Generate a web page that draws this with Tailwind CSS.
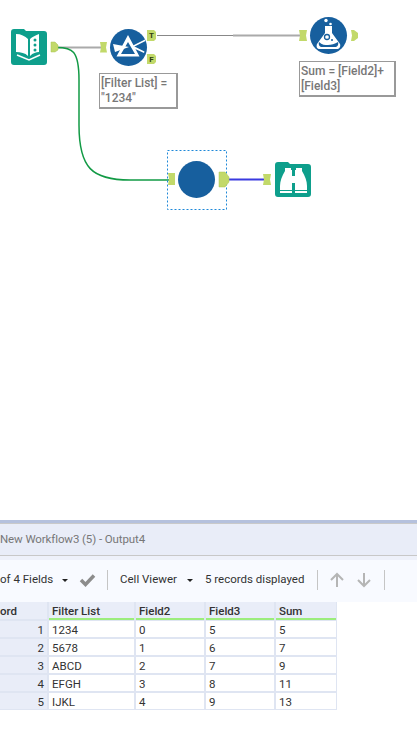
<!DOCTYPE html>
<html lang="en">
<head>
    <meta charset="UTF-8">
    <title>New Workflow3 (5) - Output4</title>
    <script src="https://cdn.jsdelivr.net/npm/@tailwindcss/browser@4"></script>
</head>
<body class="bg-white w-[417px] h-[742px] overflow-hidden font-['Roboto',sans-serif] text-[11.5px] text-[#333]">
    <!-- Workflow canvas -->
    <div class="relative h-[520px]">
        <!-- Connections and nodes -->
        <svg class="absolute left-0 top-0" width="417" height="520" viewBox="0 0 417 520" fill="none">
            <path d="M57 47.5H102" stroke="#aaa" stroke-width="2"/>
            <path d="M57 47.5C72 47.5 79 50 79 80V125C79 168 92 180 130 180H171" stroke="#129a45" stroke-width="1.5"/>
            <path d="M157 35.5H233" stroke="#888" stroke-width="1.2"/>
            <path d="M233 35.5H302" stroke="#aaa" stroke-width="2"/>
            <path d="M229 179.5H267" stroke="#3a3ae0" stroke-width="2"/>

            <!-- Input book -->
            <path d="M11 32a3 3 0 0 1 3-3h10l2 2h18a3 3 0 0 1 3 3v28a3 3 0 0 1-3 3H14a3 3 0 0 1-3-3Z" fill="#0e9f8c"/>
            <path d="M16 34c5 0 9 2 12 5v17c-3-3-7-4-12-4Z" fill="#fff"/>
            <path d="M30 39c2-2 6-4 9-5v18c-3 0-6 1-9 4Z" fill="#fff"/>
            <circle cx="35" cy="40" r="1.500" fill="#0e9f8c"/>
            <circle cx="35" cy="45" r="1.500" fill="#0e9f8c"/>
            <circle cx="35" cy="50" r="1.500" fill="#0e9f8c"/>
            <path d="M17 55l12 5 11-5" stroke="#fff" stroke-width="1.500"/>
            <path d="M51 42h4l3 3v5l-3 2h-4Z" fill="#c2d96a" stroke="#a9c455" stroke-width=".5"/>

            <!-- Filter -->
            <path d="M100 42h7l-1 5.500 1 5h-7l1-5Z" fill="#c2d96a"/>
            <circle cx="128.500" cy="47.500" r="18.500" fill="#175f9e"/>
            <path d="M128 35l-11.500 21.500h23Z M128 42l-7 12h14Z" fill="#fff" fill-rule="evenodd"/>
            <path d="M113 44l16 3-14 5Z" fill="#fff"/>
            <path d="M132 46l13-6.500.5 1.500-12 6Z M133 48l11 5 .5-1.500-10-5Z" fill="#fff"/>
            <path d="M147 30h7l2 2v7l-2 2h-7Z" fill="#c2d96a"/>
            <path d="M147 54h7l2 2v6l-2 2h-7Z" fill="#c2d96a"/>

            <!-- Formula -->
            <path d="M299 30h8l-1 5.500 1 5.500h-8l1-5.500Z" fill="#c2d96a"/>
            <circle cx="328.500" cy="35.500" r="18.500" fill="#175f9e"/>
            <circle cx="326" cy="20.500" r="1.700" fill="#fff"/>
            <circle cx="330.500" cy="24" r="1.300" fill="#fff"/>
            <path d="M325 26h7v7l8 11c1 3-1 5-3 5h-17c-3 0-4-2-3-5l8-11Z" fill="#fff"/>
            <circle cx="327" cy="37" r="2.500" fill="none" stroke="#175f9e" stroke-width="1.300"/>
            <circle cx="332" cy="40" r="1" fill="#175f9e"/>
            <path d="M319 42c3 3 6 3 9 3s7-1 10-3c1 3-1 5-3 5h-13c-2 0-4-2-3-5Z" fill="#175f9e"/>
            <path d="M351 30h3l4 3v5l-4 3h-3l1-5.500Z" fill="#c2d96a"/>

            <!-- Selected tool -->
            <rect x="167.500" y="150.500" width="59" height="59" stroke="#1e88d8" stroke-dasharray="2 2"/>
            <path d="M168 173h7v12h-7l1-6Z" fill="#c2d96a"/>
            <circle cx="196.500" cy="179.500" r="18.500" fill="#175f9e"/>
            <path d="M219 172h6l4 5v5l-4 5h-6Z" fill="#c2d96a" stroke="#a9c455" stroke-width=".5"/>

            <!-- Browse -->
            <path d="M263 174h8l-1 5.500 1 5.500h-8l1-5.500Z" fill="#c2d96a"/>
            <path d="M275 165a3 3 0 0 1 3-3h10l2 2h18a3 3 0 0 1 3 3v27a3 3 0 0 1-3 3h-30a3 3 0 0 1-3-3Z" fill="#0e9f8c"/>
            <path d="M285 168h6v2h1v20h-12v-4c0-5 2-10 5-15Z" fill="#fff"/>
            <path d="M296 168h6v3c3 5 5 10 5 15v4h-12v-20h1Z" fill="#fff"/>
            <path d="M292 176h3v7h-3Z" fill="#fff"/>
            <path d="M280 191h12v2h-12Z M295 191h12v2h-12Z" fill="#fff"/>
        </svg>
        <span class="absolute left-[148px] top-[30px] w-[7px] text-center text-[8px] leading-[11px] font-bold text-[#2f3d10]">T</span>
        <span class="absolute left-[148px] top-[54px] w-[7px] text-center text-[8px] leading-[11px] font-bold text-[#2f3d10]">F</span>

        <!-- Annotations -->
        <div class="absolute left-[99px] top-[73px] w-[79px] h-[36px] bg-white border border-[#999] border-r-2 border-b-2 pl-[1px] text-[12px] leading-[15px] pt-[2px] font-medium text-[#777]">[Filter List] =<br>"1234"</div>
        <div class="absolute left-[299px] top-[61px] w-[97px] h-[36px] bg-white border border-[#999] border-r-2 border-b-2 pl-[1px] text-[12px] leading-[15px] pt-[2px] font-medium text-[#777]">Sum = [Field2]+<br>[Field3]</div>
    </div>

    <!-- Results panel -->
    <div class="h-[3px] bg-[#b5c1dd]"></div>
    <div class="h-[1px] bg-[#c9c9c9]"></div>
    <div class="h-[32px] bg-[#e9edf8] border-b border-[#c8c8c8] flex items-center text-[#777] tracking-[-0.1px]">New Workflow3 (5) - Output4</div>
    <div class="h-[4px] bg-[#eef1fa]"></div>
    <div class="h-[42px] pb-[2px] bg-[#f8faff] flex items-center">
        <span class="w-[60px] shrink-0">of 4 Fields</span>
        <span class="w-0 h-0 ml-[2px] border-x-[3px] border-x-transparent border-t-[3px] border-t-[#222]"></span>
        <svg class="ml-[11px]" width="17" height="14" viewBox="0 0 17 14" fill="none"><path d="M2 7l4.500 4.500L15 2.500" stroke="#8c8c8c" stroke-width="3.500"/></svg>
        <span class="w-px h-[20px] ml-[11px] bg-[#c5c5c5]"></span>
        <span class="w-[58px] ml-[12px] shrink-0 whitespace-nowrap">Cell Viewer</span>
        <span class="w-0 h-0 ml-[9px] border-x-[3px] border-x-transparent border-t-[3px] border-t-[#222]"></span>
        <span class="ml-[12px] w-[100px] shrink-0 whitespace-nowrap">5 records displayed</span>
        <span class="w-px h-[20px] ml-[12px] bg-[#c5c5c5]"></span>
        <svg class="ml-[11px]" width="16" height="16" viewBox="0 0 16 16" fill="none"><path d="M8 15V2M2 8l6-6 6 6" stroke="#b5b5b5" stroke-width="2"/></svg>
        <svg class="ml-[11px]" width="16" height="16" viewBox="0 0 16 16" fill="none"><path d="M8 1v13M2 8l6 6 6-6" stroke="#b5b5b5" stroke-width="2"/></svg>
        <span class="w-px h-[20px] ml-[12px] bg-[#c5c5c5]"></span>
    </div>

    <!-- Data grid -->
    <div class="w-[337px] grid grid-cols-[47px_85px_68px_68px_60px] gap-[2px] bg-[#dfe5f2] pr-[1px] pb-[1px] leading-[18px]">
        <div class="bg-[#e9edf8] h-[17px] font-medium">ord</div>
        <div class="bg-[#e9edf8] h-[17px] pl-[3px] font-medium relative">Filter List<i class="absolute left-0 right-0 -bottom-[1px] h-[2px] bg-[#9ced7c]"></i></div>
        <div class="bg-[#e9edf8] h-[17px] pl-[3px] font-medium relative">Field2<i class="absolute left-0 right-0 -bottom-[1px] h-[2px] bg-[#9ced7c]"></i></div>
        <div class="bg-[#e9edf8] h-[17px] pl-[3px] font-medium relative">Field3<i class="absolute left-0 right-0 -bottom-[1px] h-[2px] bg-[#9ced7c]"></i></div>
        <div class="bg-[#e9edf8] h-[17px] pl-[3px] font-medium relative">Sum<i class="absolute left-0 right-0 -bottom-[1px] h-[2px] bg-[#9ced7c]"></i></div>

        <div class="bg-[#e9edf8] h-[16px] pr-[3px] text-right">1</div>
        <div class="bg-white h-[16px] pl-[3px]">1234</div>
        <div class="bg-white h-[16px] pl-[3px]">0</div>
        <div class="bg-white h-[16px] pl-[3px]">5</div>
        <div class="bg-white h-[16px] pl-[3px]">5</div>

        <div class="bg-[#e9edf8] h-[16px] pr-[3px] text-right">2</div>
        <div class="bg-white h-[16px] pl-[3px]">5678</div>
        <div class="bg-white h-[16px] pl-[3px]">1</div>
        <div class="bg-white h-[16px] pl-[3px]">6</div>
        <div class="bg-white h-[16px] pl-[3px]">7</div>

        <div class="bg-[#e9edf8] h-[16px] pr-[3px] text-right">3</div>
        <div class="bg-white h-[16px] pl-[3px]">ABCD</div>
        <div class="bg-white h-[16px] pl-[3px]">2</div>
        <div class="bg-white h-[16px] pl-[3px]">7</div>
        <div class="bg-white h-[16px] pl-[3px]">9</div>

        <div class="bg-[#e9edf8] h-[16px] pr-[3px] text-right">4</div>
        <div class="bg-white h-[16px] pl-[3px]">EFGH</div>
        <div class="bg-white h-[16px] pl-[3px]">3</div>
        <div class="bg-white h-[16px] pl-[3px]">8</div>
        <div class="bg-white h-[16px] pl-[3px]">11</div>

        <div class="bg-[#e9edf8] h-[16px] pr-[3px] text-right">5</div>
        <div class="bg-white h-[16px] pl-[3px]">IJKL</div>
        <div class="bg-white h-[16px] pl-[3px]">4</div>
        <div class="bg-white h-[16px] pl-[3px]">9</div>
        <div class="bg-white h-[16px] pl-[3px]">13</div>
    </div>
</body>
</html>
